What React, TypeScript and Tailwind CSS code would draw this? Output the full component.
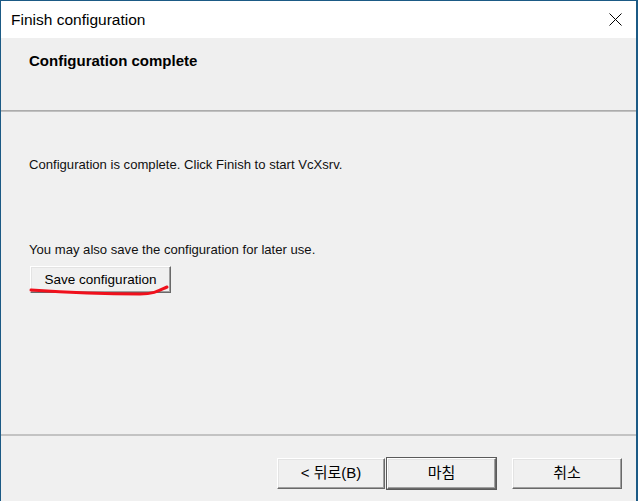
const font = { fontFamily: '"Liberation Sans", "Noto Sans CJK KR", sans-serif' };

function WinButton({
  label,
  isDefault = false,
  className = "",
  textSize = "text-[13px]",
}: {
  label: string;
  isDefault?: boolean;
  className?: string;
  textSize?: string;
}) {
  return (
    <div className={`${isDefault ? "border border-[#5a5a5a]" : "border border-transparent"} ${className}`}>
      <button
        className={`w-full h-full bg-[#f0f0f0] ${textSize} text-black border border-t-white border-l-white border-b-[#696969] border-r-[#696969] shadow-[inset_-1px_-1px_0_#a0a0a0,inset_1px_1px_0_#e3e3e3]`}
        style={font}
      >
        {label}
      </button>
    </div>
  );
}

export default function App() {
  return (
    <div
      className="w-[638px] h-[501px] flex flex-col bg-[#f0f0f0] border-l border-t border-r-2 border-[#1b5a85] overflow-hidden"
      style={font}
    >
      {/* title bar */}
      <div className="h-[37px] bg-white flex items-center justify-between pl-[10px] pr-[13px] shrink-0">
        <span className="text-[15.5px] text-black">Finish configuration</span>
        <svg width="13" height="13" viewBox="0 0 13 13" className="mr-[1px]">
          <path d="M0.5 0.5 L12.5 12.5 M12.5 0.5 L0.5 12.5" stroke="#000" strokeWidth="1" />
        </svg>
      </div>

      {/* header */}
      <div className="h-[72px] pl-[28px] pt-[14px] shrink-0 bg-[#efefef]">
        <h1 className="text-[15px] font-bold text-black leading-[18px]">Configuration complete</h1>
      </div>
      <div className="h-[2px] bg-[#c0c0c0] border-t border-[#acacac] shrink-0" />

      {/* content */}
      <div className="flex-1 pl-[28px] pt-[45px] text-[13.1px] leading-[16px] text-[#111]">
        <p>Configuration is complete. Click Finish to start VcXsrv.</p>
        <p className="mt-[69px]">You may also save the configuration for later use.</p>
        <div className="relative mt-[7px] w-[143px] h-[29px]">
          <WinButton label="Save configuration" className="w-full h-full" textSize="text-[13.5px]" />
          <svg className="absolute left-0 top-0 overflow-visible pointer-events-none" width="143" height="32">
            <path
              d="M2 25 C31 27 71 29 111 29 C126 29 131 25 138 22"
              fill="none"
              stroke="#f0101c"
              strokeWidth="3"
              strokeLinecap="round"
            />
          </svg>
        </div>
      </div>

      <div className="h-[2px] bg-[#c3c3c3] shrink-0" />

      {/* footer */}
      <div className="h-[65px] shrink-0 flex items-start justify-end pt-[21px] pr-[13px]">
        <WinButton label="< 뒤로(B)" className="w-[110px] h-[33px]" textSize="text-[15px]" />
        <WinButton label="마침" isDefault className="w-[111px] h-[33px]" textSize="text-[15px]" />
        <WinButton label="취소" className="w-[112px] h-[33px] ml-[14px]" textSize="text-[15px]" />
      </div>
    </div>
  );
}
